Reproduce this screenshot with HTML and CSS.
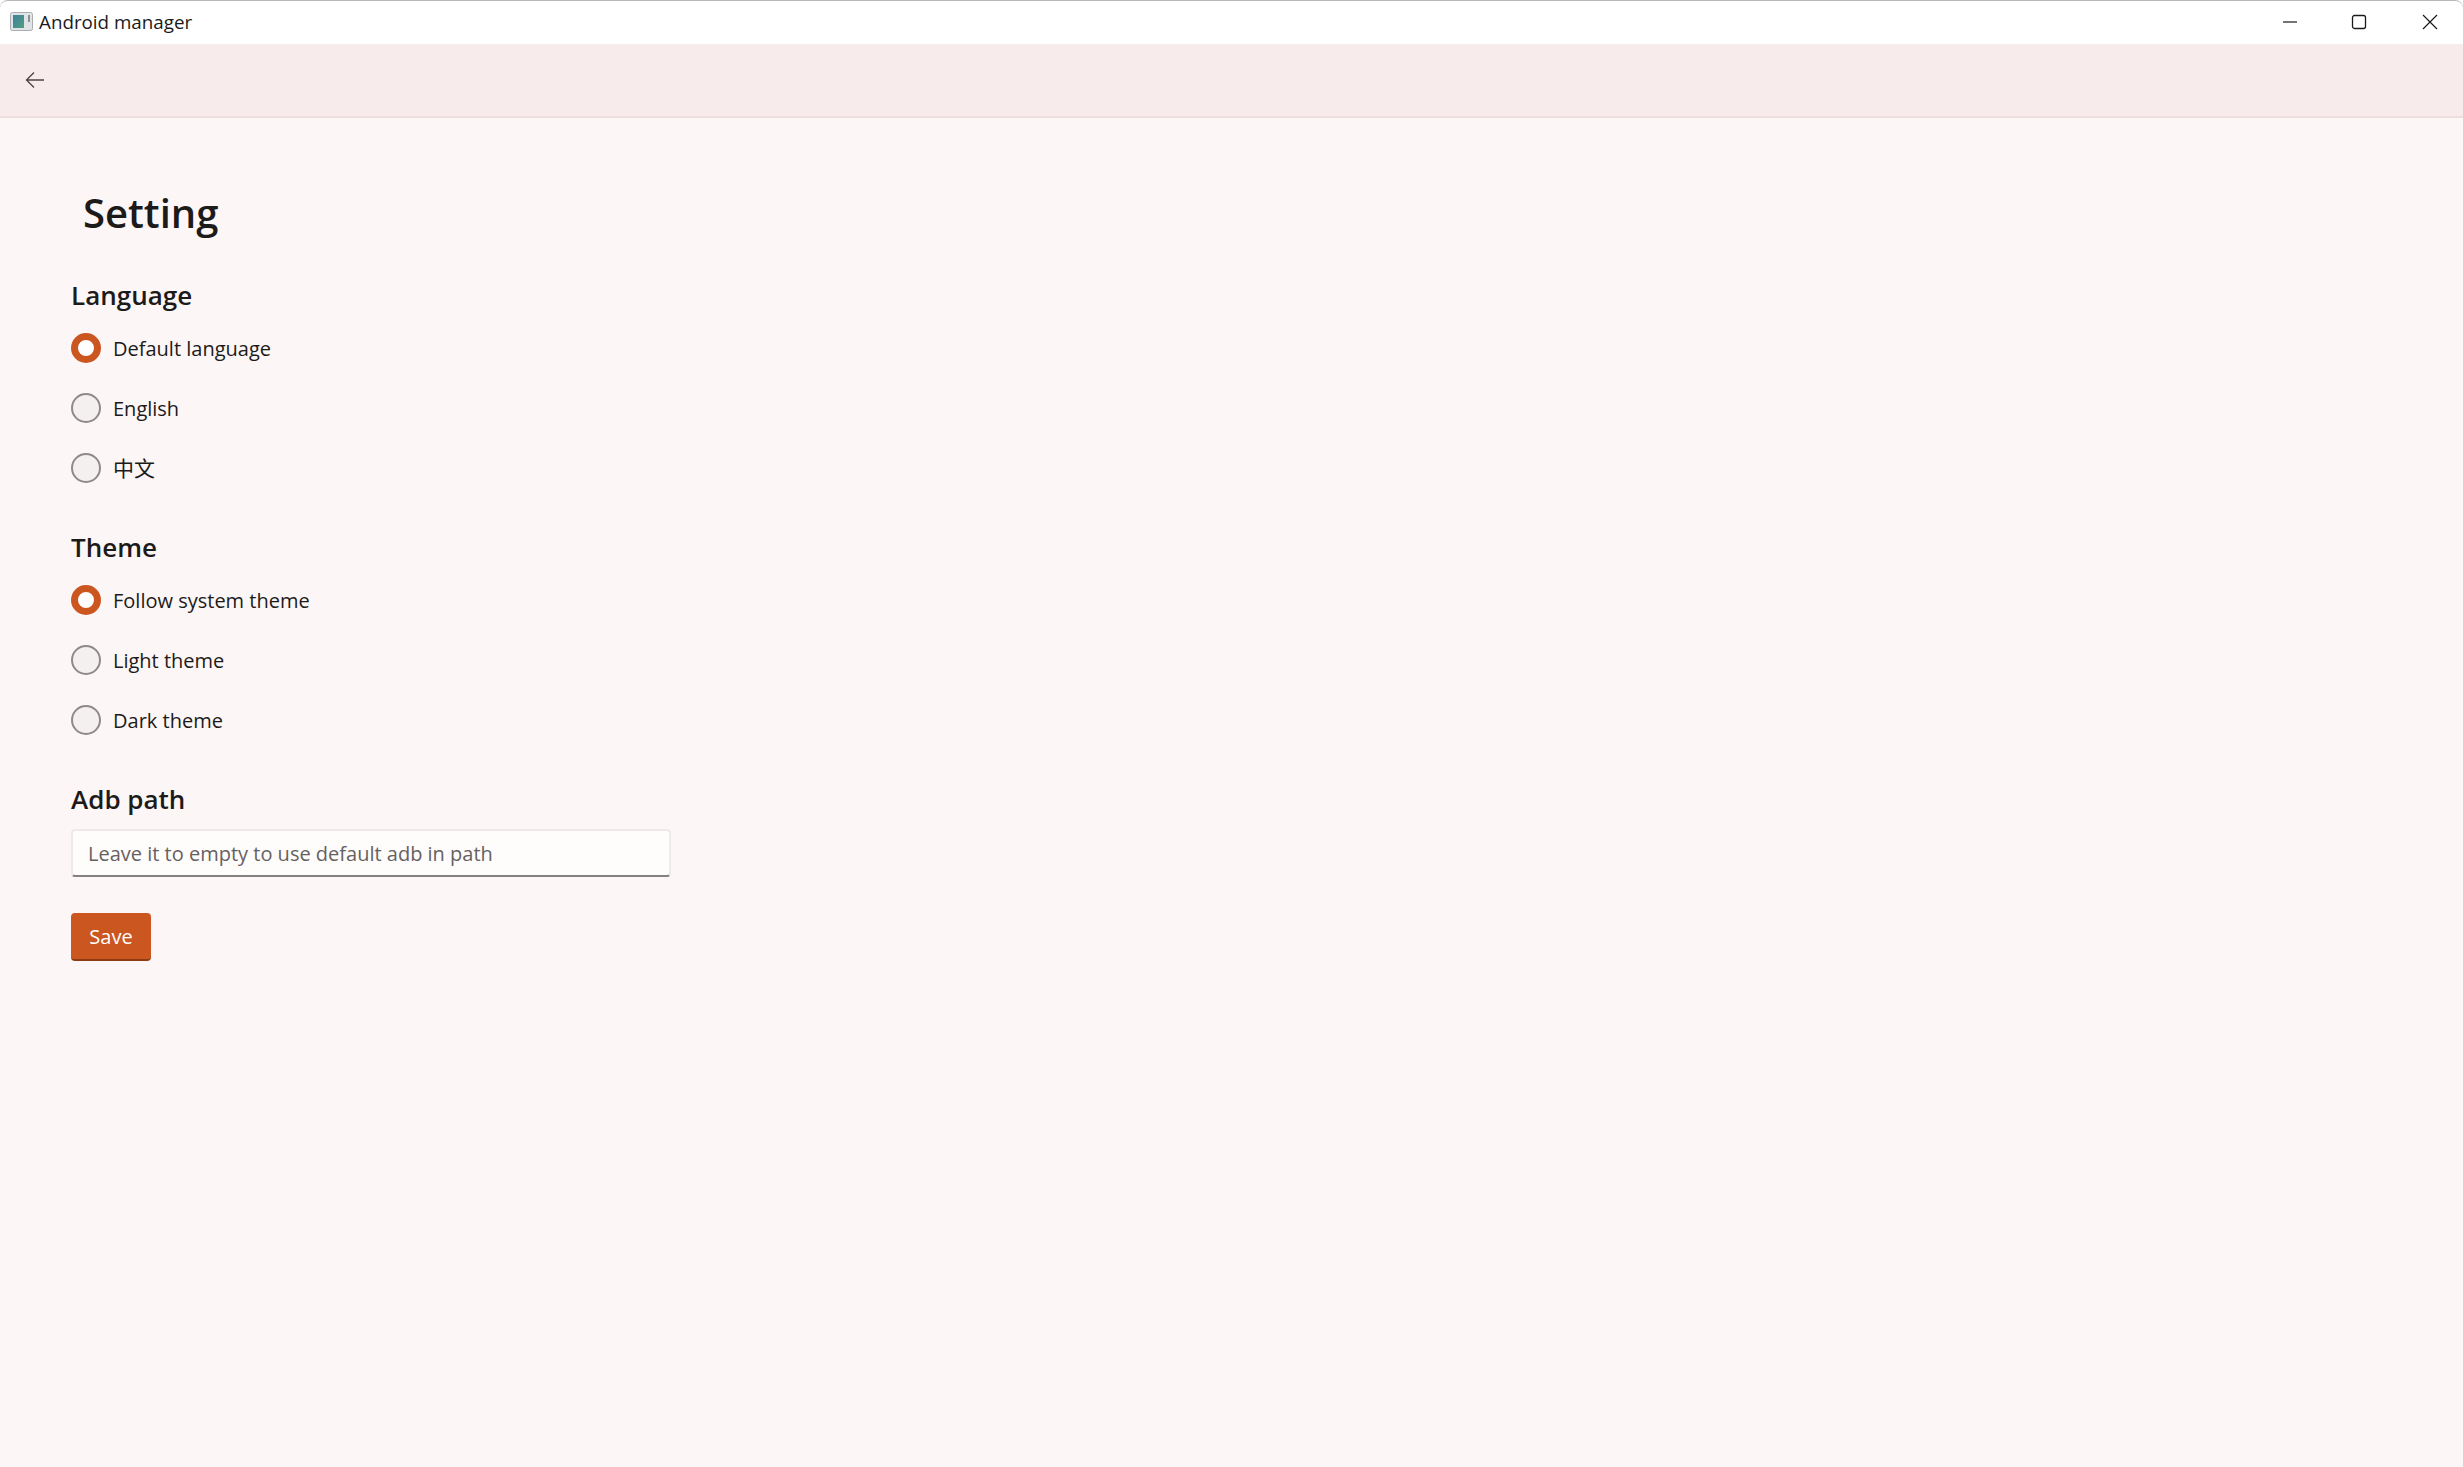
FILE: index.html
```html
<!DOCTYPE html>
<html lang="en">
<head>
    <meta charset="UTF-8">
    <title>Android manager</title>
    <link rel="stylesheet" href="styles.css">
</head>
<body>
    <div class="titlebar">
        <svg class="app-icon" width="24" height="20" viewBox="0 0 24 20">
            <defs>
                <linearGradient id="appfill" x1="0" y1="0" x2="1" y2="1">
                    <stop offset="0" stop-color="#3f7fa0"/>
                    <stop offset="1" stop-color="#4fa07a"/>
                </linearGradient>
            </defs>
            <rect x="0.5" y="0.5" width="22" height="18" rx="2" fill="#dfe4e6" stroke="#a9adb0"/>
            <rect x="3" y="3" width="11" height="13" fill="url(#appfill)"/>
            <rect x="18" y="3" width="2" height="7" fill="#8a9296"/>
        </svg>
        <span class="app-title">Android manager</span>
        <div class="window-buttons">
            <svg width="16" height="16" viewBox="0 0 16 16"><path d="M1 8h14" stroke="#1a1a1a" stroke-width="1.2"/></svg>
            <svg width="16" height="16" viewBox="0 0 16 16"><rect x="1.5" y="1.5" width="13" height="13" rx="2" fill="none" stroke="#1a1a1a" stroke-width="1.3"/></svg>
            <svg class="close-icon" width="16" height="16" viewBox="0 0 16 16"><path d="M1 1l14 14M15 1L1 15" stroke="#1a1a1a" stroke-width="1.2"/></svg>
        </div>
    </div>

    <div class="toolbar">
        <svg width="20" height="18" viewBox="0 0 20 18"><path d="M9 1.5L1.5 9 9 16.5M1.5 9H19" fill="none" stroke="#4e4345" stroke-width="1.3"/></svg>
    </div>

    <main class="content">
        <h1>Setting</h1>

        <section class="group">
            <h2>Language</h2>
            <div class="radio-row"><span class="radio checked"></span><span>Default language</span></div>
            <div class="radio-row"><span class="radio"></span><span>English</span></div>
            <div class="radio-row"><span class="radio"></span><span class="cjk">中文</span></div>
        </section>

        <section class="group">
            <h2>Theme</h2>
            <div class="radio-row"><span class="radio checked"></span><span>Follow system theme</span></div>
            <div class="radio-row"><span class="radio"></span><span>Light theme</span></div>
            <div class="radio-row"><span class="radio"></span><span>Dark theme</span></div>
        </section>

        <section class="group adb-group">
            <h2 class="adb-title">Adb path</h2>
            <input class="path-input" type="text" placeholder="Leave it to empty to use default adb in path">
        </section>

        <button class="save-btn" type="button">Save</button>
    </main>
</body>
</html>
```

FILE: styles.css
```css
html, body {
    margin: 0;
    height: 100%;
}
body {
    font-family: "Open Sans", "Noto Sans CJK SC", sans-serif;
    background-color: #FFFFFF;
    color: #1d1a1a;
    overflow: hidden;
    display: flex;
    flex-direction: column;
}
.titlebar {
    height: 44px;
    flex-shrink: 0;
    box-sizing: border-box;
    background-color: #FFFFFF;
    border-top: 1px solid #b8b8b8;
    border-radius: 8px 8px 0 0;
    display: flex;
    align-items: center;
    padding: 0 0 2px 10px;
}
.app-icon {
    margin-right: 5px;
}
.app-title {
    font-size: 18.8px;
    color: #1a1a1a;
}
.window-buttons {
    margin-left: auto;
    display: flex;
    gap: 53px;
    padding-right: 25px;
}
.close-icon {
    margin-left: 2px;
}
.toolbar {
    height: 72px;
    flex-shrink: 0;
    background-color: #F7EBEB;
    border-bottom: 2px solid #EEDFDE;
    display: flex;
    align-items: center;
    padding-left: 25px;
}
.content {
    flex: 1;
    background-color: #FCF6F6;
    padding: 67px 0 0 71px;
}
h1 {
    margin: 0 0 36px 12px;
    font-size: 40px;
    line-height: 56px;
    font-weight: 600;
}
.group {
    margin-bottom: 31px;
}
.adb-group {
    margin-bottom: 36px;
}
h2 {
    margin: 0 0 5px 0;
    font-size: 26px;
    line-height: 36px;
    font-weight: 600;
}
.radio-row {
    display: flex;
    align-items: center;
    height: 60px;
    font-size: 20px;
}
.cjk {
    font-size: 21px;
    margin-bottom: 2px;
}
.radio {
    box-sizing: border-box;
    width: 30px;
    height: 30px;
    border-radius: 50%;
    border: 2px solid #8f8a8a;
    background-color: #F5F0F0;
    margin-right: 12px;
}
.radio.checked {
    border: 7px solid #CB5620;
    background-color: #FFFFFF;
}
.adb-title {
    margin-bottom: 12px;
}
.path-input {
    display: block;
    box-sizing: border-box;
    width: 600px;
    height: 48px;
    padding: 0 15px;
    font-family: inherit;
    font-size: 20px;
    color: #1d1a1a;
    background-color: #FFFCFC;
    border: 2px solid #EFE9E9;
    border-bottom: 2px solid #858181;
    border-radius: 4px;
    outline: none;
}
.path-input::placeholder {
    color: #666161;
    opacity: 1;
}
.save-btn {
    display: block;
    width: 80px;
    height: 48px;
    font-family: inherit;
    font-size: 20px;
    color: #FFFFFF;
    background-color: #CB5620;
    border: none;
    border-bottom: 2px solid #8f3c16;
    border-radius: 4px;
    padding: 0;
}
```
